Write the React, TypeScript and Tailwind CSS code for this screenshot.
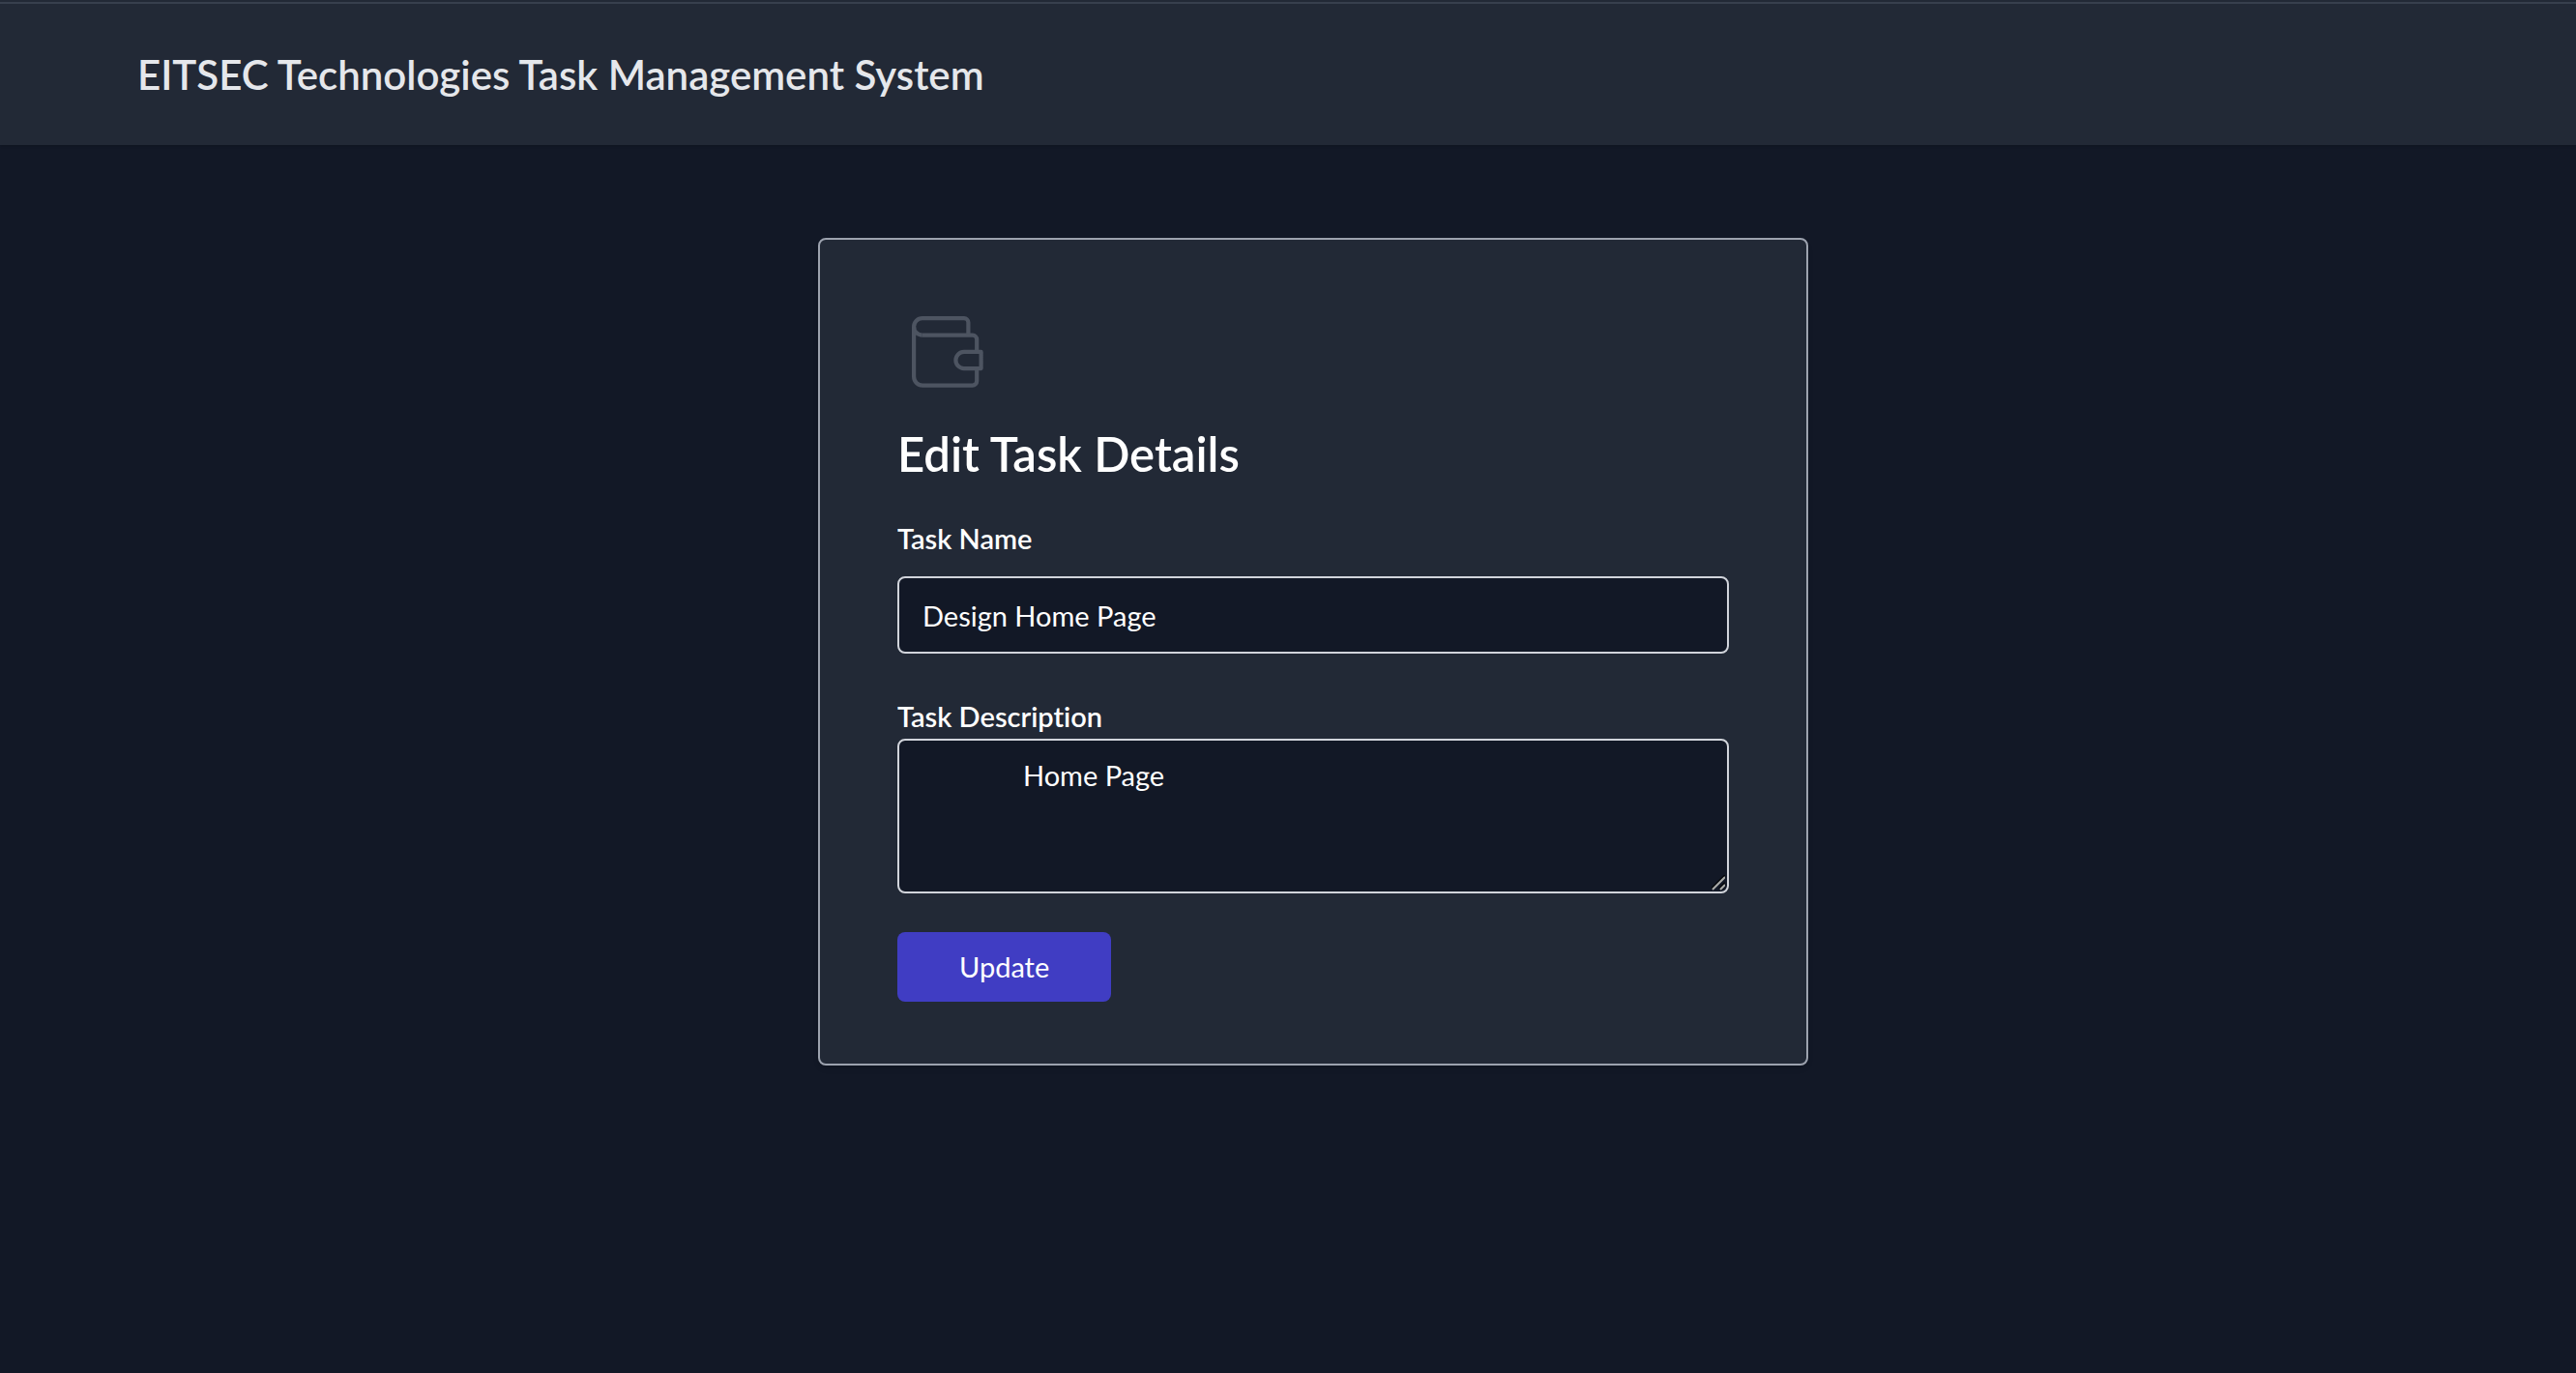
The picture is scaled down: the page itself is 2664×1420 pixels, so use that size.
function WalletIcon() {
  return (
    <svg
      className="ml-[15px] size-[74px] text-[#4d5461]"
      viewBox="0 0 74 74"
      fill="none"
      stroke="currentColor"
      strokeWidth="4.2"
      strokeLinejoin="round"
      aria-hidden="true"
    >
      <path d="M10.8 19.6a8.7 8.7 0 0 1 0-17.4H54a4.4 4.4 0 0 1 4.4 4.4v13" />
      <path d="M2.1 10.9v51.7a9 9 0 0 0 9 9h51.6a4.5 4.5 0 0 0 4.5-4.5V54M67.2 37V24.1a4.5 4.5 0 0 0-4.5-4.5H10.8" />
      <path d="M71.6 36.9H54a8.6 8.6 0 0 0 0 17.2h17.6z" />
    </svg>
  );
}

function ResizeGrip() {
  return (
    <svg
      className="pointer-events-none absolute right-1 bottom-[3px] h-4 w-[14px]"
      viewBox="0 0 14 16"
      fill="none"
      aria-hidden="true"
    >
      <path d="M0 14L14 0M8 14l6-6" stroke="#05070c" strokeWidth="2" />
      <path d="M1 15L14 2M9 15l5-5" stroke="#a9aaa8" strokeWidth="2" />
    </svg>
  );
}

const description = " ".repeat(14) + "Home Page";

export default function App() {
  return (
    <div className="min-h-screen bg-[#121826] font-['Lato',sans-serif] text-white [font-variant-ligatures:none]">
      <header className="relative bg-[#222936] pt-0.5 shadow-sm">
        <div className="border-t-2 border-[#373f4d] px-[142px] py-12">
          <h2 className="text-[42px] leading-[50px] font-semibold text-[#e5e7eb]">
            EITSEC Technologies Task Management System
          </h2>
        </div>
      </header>

      <main className="flex justify-center pt-24 pl-[52px]">
        <form
          className="w-full max-w-[1024px] rounded-lg border-2 border-[#9ca2ae] bg-[#222936] px-20 pt-[79px] pb-16 shadow-md"
          onSubmit={(e) => e.preventDefault()}
        >
          <WalletIcon />
          <h1 className="mt-9 text-[49px] leading-[64px] font-semibold">
            Edit Task Details
          </h1>

          <label htmlFor="task-name" className="mt-9 block text-[29px] leading-10 font-semibold">
            Task Name
          </label>
          <input
            id="task-name"
            type="text"
            defaultValue="Design Home Page"
            className="mt-[19px] block h-20 w-full rounded-lg border-2 border-[#d1d4db] bg-[#121826] px-6 text-[29px] leading-10"
          />

          <label htmlFor="task-description" className="mt-[45px] block text-[29px] leading-10 font-semibold">
            Task Description
          </label>
          <div className="relative mt-[3px]">
            <textarea
              id="task-description"
              defaultValue={description}
              className="block h-40 w-full resize-none rounded-lg border-2 border-[#d1d4db] bg-[#121826] px-6 py-4 text-[29px] leading-10"
            />
            <ResizeGrip />
          </div>

          <button
            type="submit"
            className="mt-10 block h-[72px] rounded-lg bg-[#403dc3] px-16 text-[29px] leading-10"
          >
            Update
          </button>
        </form>
      </main>
    </div>
  );
}
